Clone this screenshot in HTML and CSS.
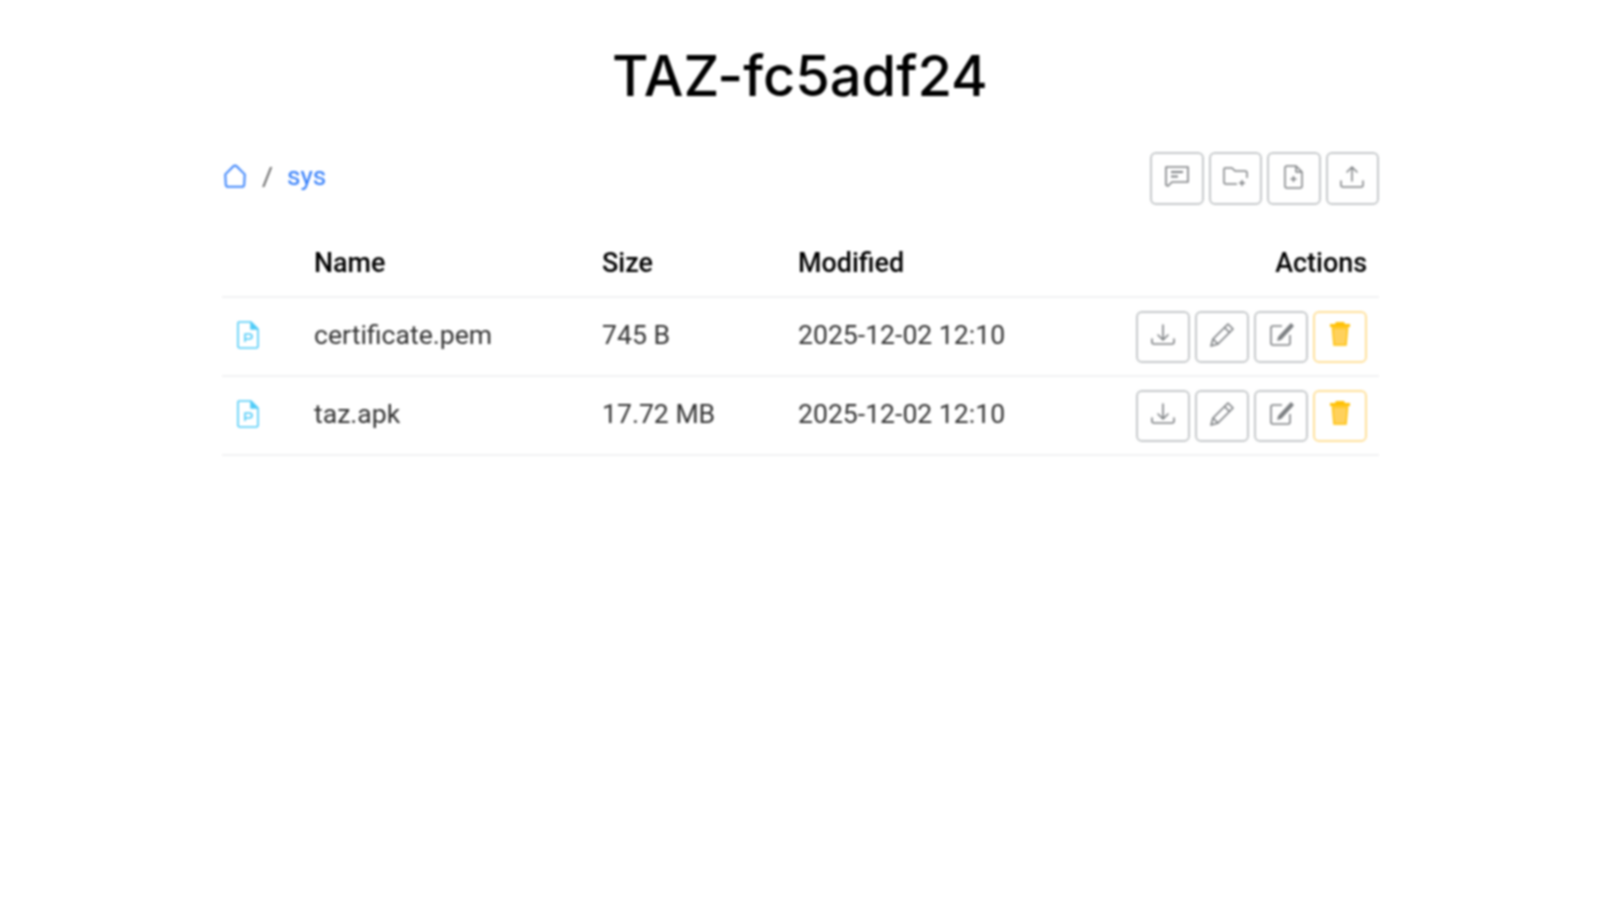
FILE: index.html
```html
<!DOCTYPE html>
<html>
  <head>
    <meta charset="UTF-8">
    <title>TAZ-fc5adf24</title>
    <link rel="stylesheet" href="styles.css">
  </head>
  <body>
    <div class="page">
    <h1 class="title">TAZ-fc5adf24</h1>
    <div class="content">
      <div class="toolbar">
        <div class="crumbs">
          <a class="crumb-home" href="#">
            <svg width="26" height="26" viewBox="0 0 24 24" fill="none" stroke="currentColor" stroke-width="1.9" stroke-linejoin="round"><path d="M3 10.500 10.500 3Q12 1.800 13.500 3L21 10.500 20.500 20Q20.300 22 18.500 22H5.500Q3.700 22 3.500 20Z"/></svg>
          </a>
          <span class="sep">/</span>
          <a class="crumb" href="#">sys</a>
        </div>
        <div class="btn-group">
          <button class="btn">
            <svg width="28" height="28" viewBox="0 0 28 28" fill="none" stroke="currentColor" stroke-width="1.6" stroke-linejoin="round"><path d="M3 4h22v15H9l-4 4-2-1V4z"/><path d="M8 9h12M8 13.500h7" stroke-width="2"/></svg>
          </button>
          <button class="btn">
            <svg width="28" height="28" viewBox="0 0 28 28" fill="none" stroke="currentColor" stroke-width="1.5" stroke-linejoin="round"><path d="M16 21H5q-2 0-2-2V6q0-1 1-1h7l3 3h10q2 0 2 2v5"/><path d="M21 17v6M18 20h6"/></svg>
          </button>
          <button class="btn">
            <svg width="28" height="28" viewBox="0 0 28 28" fill="none" stroke="currentColor" stroke-width="1.5" stroke-linejoin="round"><path d="M7 3h9l6 6v14q0 2-2 2H7q-2 0-2-2V5q0-2 2-2z"/><path d="M16 3v6h6M13.500 13v6M10.500 16h6"/></svg>
          </button>
          <button class="btn">
            <svg width="28" height="28" viewBox="0 0 28 28" fill="none" stroke="currentColor" stroke-width="1.5" stroke-linejoin="round" stroke-linecap="round"><path d="M14 18V4M9 9l5-5 5 5"/><path d="M3 18v4q0 2 2 2h18q2 0 2-2v-4"/></svg>
          </button>
        </div>
      </div>
      <table class="files">
        <colgroup>
          <col class="col-icon">
          <col class="col-name">
          <col class="col-size">
          <col class="col-mod">
          <col>
        </colgroup>
        <thead>
          <tr>
            <th></th>
            <th>Name</th>
            <th>Size</th>
            <th>Modified</th>
            <th class="right">Actions</th>
          </tr>
        </thead>
        <tbody>
          <tr>
            <td class="cell-tool"><svg class="file-icon" width="26" height="30" viewBox="0 0 26 30" fill="none" stroke="currentColor" stroke-width="1.600" stroke-linejoin="round"><path d="M4 2h12l7 7v17q0 2-2 2H5q-2 0-2-2V3q0-1 1-1z"/><path d="M16 2v7h7" fill="currentColor"/><path d="M10 22v-8h4q3 0 3 2.500T14 19h-4"/></svg></td>
            <td>certificate.pem</td>
            <td>745 B</td>
            <td>2025-12-02 12:10</td>
            <td class="cell-tool">
              <div class="actions">
                <button class="btn"><svg width="28" height="28" viewBox="0 0 28 28" fill="none" stroke="currentColor" stroke-width="1.6" stroke-linecap="round" stroke-linejoin="round"><path d="M14 4v15M9 14l5 5 5-5"/><path d="M3 18v3q0 2 2 2h18q2 0 2-2v-3"/></svg></button>
                <button class="btn"><svg width="28" height="28" viewBox="0 0 28 28" fill="none" stroke="currentColor" stroke-width="1.6" stroke-linejoin="round"><path d="M20 3l5 5L10 23l-7 2 2-7z"/><path d="M16.500 6.500l5 5M5 18l5 5" /></svg></button>
                <button class="btn"><svg width="28" height="28" viewBox="0 0 28 28" fill="none" stroke="currentColor" stroke-width="1.6" stroke-linejoin="round"><path d="M23 14v8q0 2-2 2H6q-2 0-2-2V7q0-2 2-2h9"/><path d="M24 3 12 16l-1 3 3-1L26 5z" fill="currentColor"/></svg></button>
                <button class="btn btn-warn"><svg width="28" height="28" viewBox="0 0 28 28"><path d="M10 1h8l1 2h5v3H4V3h5z" fill="#ffc107"/><path d="M6.500 7h15L20 24H8z" fill="#ffd15c" stroke="#ffc107" stroke-width="1.500"/></svg></button>
              </div>
            </td>
          </tr>
          <tr>
            <td class="cell-tool"><svg class="file-icon" width="26" height="30" viewBox="0 0 26 30" fill="none" stroke="currentColor" stroke-width="1.600" stroke-linejoin="round"><path d="M4 2h12l7 7v17q0 2-2 2H5q-2 0-2-2V3q0-1 1-1z"/><path d="M16 2v7h7" fill="currentColor"/><path d="M10 22v-8h4q3 0 3 2.500T14 19h-4"/></svg></td>
            <td>taz.apk</td>
            <td>17.72 MB</td>
            <td>2025-12-02 12:10</td>
            <td class="cell-tool">
              <div class="actions">
                <button class="btn"><svg width="28" height="28" viewBox="0 0 28 28" fill="none" stroke="currentColor" stroke-width="1.6" stroke-linecap="round" stroke-linejoin="round"><path d="M14 4v15M9 14l5 5 5-5"/><path d="M3 18v3q0 2 2 2h18q2 0 2-2v-3"/></svg></button>
                <button class="btn"><svg width="28" height="28" viewBox="0 0 28 28" fill="none" stroke="currentColor" stroke-width="1.6" stroke-linejoin="round"><path d="M20 3l5 5L10 23l-7 2 2-7z"/><path d="M16.500 6.500l5 5M5 18l5 5" /></svg></button>
                <button class="btn"><svg width="28" height="28" viewBox="0 0 28 28" fill="none" stroke="currentColor" stroke-width="1.6" stroke-linejoin="round"><path d="M23 14v8q0 2-2 2H6q-2 0-2-2V7q0-2 2-2h9"/><path d="M24 3 12 16l-1 3 3-1L26 5z" fill="currentColor"/></svg></button>
                <button class="btn btn-warn"><svg width="28" height="28" viewBox="0 0 28 28"><path d="M10 1h8l1 2h5v3H4V3h5z" fill="#ffc107"/><path d="M6.500 7h15L20 24H8z" fill="#ffd15c" stroke="#ffc107" stroke-width="1.500"/></svg></button>
              </div>
            </td>
          </tr>
        </tbody>
      </table>
    </div>
    </div>
  </body>
</html>
```

FILE: styles.css
```css
* {
  box-sizing: border-box;
}
body {
  margin: 0;
  background: #fff;
  color: #212529;
  font-family: Roboto, "Liberation Sans", sans-serif;
  font-size: 26.6px;
}
/* the whole reference is soft, like an upscaled capture */
.page {
  min-height: 900px;
  filter: blur(0.8px);
}
.title {
  margin: 0;
  padding-top: 39px;
  height: 152px;
  text-align: center;
  font-family: Inter, Roboto, sans-serif;
  font-size: 56px;
  font-weight: 500;
  line-height: 74px;
  color: #000;
}
.content {
  width: 1157px;
  margin: 0 0 0 222px;
}
.toolbar {
  display: flex;
  justify-content: space-between;
  align-items: flex-start;
  height: 81px;
}
.crumbs {
  display: flex;
  align-items: center;
  gap: 14px;
  height: 48px;
}
.crumb-home {
  display: flex;
  color: #3f86fb;
}
.crumb {
  color: #2f7bfa;
  font-size: 26px;
  text-decoration: none;
}
.sep {
  color: #666;
}
.btn-group,
.actions {
  display: flex;
  gap: 5px;
}
.actions {
  justify-content: flex-end;
}
.btn {
  display: flex;
  align-items: center;
  justify-content: center;
  width: 54px;
  height: 52px;
  padding: 0 0 4px;
  background: #fff;
  border: 2px solid #c6c9cb;
  border-radius: 6px;
  color: #7d8083;
}
.btn-group .btn {
  width: 53.5px;
  height: 53px;
}
.btn svg {
  display: block;
}
.btn-warn {
  border-color: #ffe09a;
  color: #ffc107;
}
.files {
  width: 100%;
  border-collapse: collapse;
  table-layout: fixed;
}
.col-icon {
  width: 80px;
}
.col-name {
  width: 288px;
}
.col-size {
  width: 196px;
}
.col-mod {
  width: 300px;
}
.files th,
.files td {
  padding: 0 12px 4px;
  text-align: left;
  border-bottom: 2px solid #f1f2f3;
}
.files th {
  height: 64px;
  font-size: 26.9px;
  font-weight: 500;
  color: #000;
}
.files td {
  height: 79px;
  color: #333;
}
.files td.cell-tool {
  padding-bottom: 0;
}
.files .right {
  text-align: right;
}
.file-icon {
  display: block;
  margin: -3px 0 0 1px;
  color: #4fcbf7;
}
```
